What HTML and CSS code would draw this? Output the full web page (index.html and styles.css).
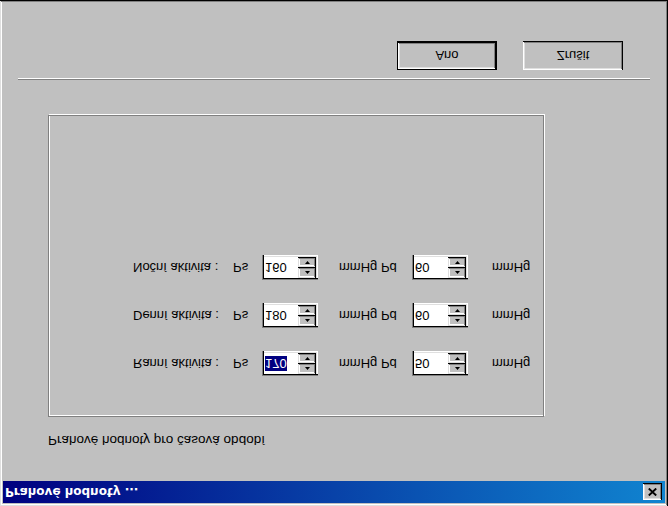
FILE: index.html
```html
<!DOCTYPE html>
<html lang="cs">
<head>
<meta charset="utf-8">
<title>Prahové hodnoty</title>
<link rel="stylesheet" href="styles.css">
</head>
<body>
<div class="screen">
  <div class="window">
    <div class="titlebar">
      <span class="title">Prahové hodnoty ...</span>
      <span class="close"><svg width="9" height="8" viewBox="0 0 9 8"><path d="M0.8 0.5 L8.2 7.5 M8.2 0.5 L0.8 7.5" stroke="#000" stroke-width="1.9" fill="none"/></svg></span>
    </div>
    <div class="grouplabel">Prahové hodnoty pro časová období</div>
    <div class="group">
      <div class="row">
        <span class="lbl">Ranní aktivita :</span>
        <span class="ps">Ps</span>
        <div class="spin"><div class="edit"><span class="sel">170</span></div><div class="updown"><span class="arrowbtn"><svg width="5" height="3" viewBox="0 0 5 3"><polygon points="2.5,0 5,3 0,3" fill="#000"/></svg></span><span class="arrowbtn"><svg width="5" height="3" viewBox="0 0 5 3"><polygon points="0,0 5,0 2.5,3" fill="#000"/></svg></span></div></div>
        <span class="unit">mmHg Pd</span>
        <div class="spin"><div class="edit"><span>50</span></div><div class="updown"><span class="arrowbtn"><svg width="5" height="3" viewBox="0 0 5 3"><polygon points="2.5,0 5,3 0,3" fill="#000"/></svg></span><span class="arrowbtn"><svg width="5" height="3" viewBox="0 0 5 3"><polygon points="0,0 5,0 2.5,3" fill="#000"/></svg></span></div></div>
        <span class="unit2">mmHg</span>
      </div>
      <div class="row">
        <span class="lbl">Denní aktivita :</span>
        <span class="ps">Ps</span>
        <div class="spin"><div class="edit"><span>180</span></div><div class="updown"><span class="arrowbtn"><svg width="5" height="3" viewBox="0 0 5 3"><polygon points="2.5,0 5,3 0,3" fill="#000"/></svg></span><span class="arrowbtn"><svg width="5" height="3" viewBox="0 0 5 3"><polygon points="0,0 5,0 2.5,3" fill="#000"/></svg></span></div></div>
        <span class="unit">mmHg Pd</span>
        <div class="spin"><div class="edit"><span>60</span></div><div class="updown"><span class="arrowbtn"><svg width="5" height="3" viewBox="0 0 5 3"><polygon points="2.5,0 5,3 0,3" fill="#000"/></svg></span><span class="arrowbtn"><svg width="5" height="3" viewBox="0 0 5 3"><polygon points="0,0 5,0 2.5,3" fill="#000"/></svg></span></div></div>
        <span class="unit2">mmHg</span>
      </div>
      <div class="row">
        <span class="lbl">Noční aktivita :</span>
        <span class="ps">Ps</span>
        <div class="spin"><div class="edit"><span>160</span></div><div class="updown"><span class="arrowbtn"><svg width="5" height="3" viewBox="0 0 5 3"><polygon points="2.5,0 5,3 0,3" fill="#000"/></svg></span><span class="arrowbtn"><svg width="5" height="3" viewBox="0 0 5 3"><polygon points="0,0 5,0 2.5,3" fill="#000"/></svg></span></div></div>
        <span class="unit">mmHg Pd</span>
        <div class="spin"><div class="edit"><span>60</span></div><div class="updown"><span class="arrowbtn"><svg width="5" height="3" viewBox="0 0 5 3"><polygon points="2.5,0 5,3 0,3" fill="#000"/></svg></span><span class="arrowbtn"><svg width="5" height="3" viewBox="0 0 5 3"><polygon points="0,0 5,0 2.5,3" fill="#000"/></svg></span></div></div>
        <span class="unit2">mmHg</span>
      </div>
    </div>
    <div class="sep"></div>
    <div class="buttons">
      <button class="btn default">Ano</button>
      <button class="btn">Zrušit</button>
    </div>
  </div>
</div>
</body>
</html>
```
FILE: styles.css
```css
html, body {
  margin: 0;
  padding: 0;
}
body {
  width: 668px;
  height: 506px;
  overflow: hidden;
  background: #c0c0c0;
  font-family: "Liberation Sans", Arial, sans-serif;
  font-size: 13px;
  color: #000;
}
.screen {
  width: 668px;
  height: 506px;
  transform: scaleY(-1);
}
.window {
  box-sizing: border-box;
  width: 668px;
  height: 506px;
  padding: 3px;
  background: #c0c0c0;
  box-shadow: inset -1px -1px #000, inset 1px 1px #dfdfdf, inset -2px -2px #808080, inset 2px 2px #fff;
  display: flex;
  flex-direction: column;
}
.titlebar {
  height: 22px;
  flex: none;
  display: flex;
  align-items: center;
  justify-content: space-between;
  padding: 0 3px 0 2px;
  background: linear-gradient(to right, #000080, #1084d0);
  color: #fff;
  font-family: "DejaVu Sans", sans-serif;
  font-weight: bold;
  font-size: 12px;
}
.close {
  width: 19px;
  height: 17px;
  background: #c0c0c0;
  box-shadow: inset -1px -1px #000, inset 1px 1px #fff, inset -2px -2px #808080, inset 2px 2px #dfdfdf;
  display: flex;
  align-items: center;
  justify-content: center;
}
.grouplabel {
  margin: 34px 0 0 45px;
  line-height: 14px;
  font-size: 13.5px;
}
.group {
  margin: 16px 0 0 45px;
  width: 496px;
  height: 302px;
  flex: none;
  box-sizing: border-box;
  border: 1px solid #808080;
  box-shadow: inset 1px 1px #fff, 1px 1px #fff;
  padding: 40px 0 0 84px;
  display: flex;
  flex-direction: column;
  gap: 23px;
}
.row {
  display: grid;
  grid-template-columns: 100px 29px 56px 94px 56px auto;
  align-items: center;
  height: 25px;
}
.unit { padding-left: 21px; }
.unit2 { padding-left: 24px; }
.spin {
  display: flex;
  height: 25px;
  box-sizing: border-box;
  padding: 2px;
  background: #fff;
  box-shadow: inset 1px 1px #808080, inset 2px 2px #000, inset -1px -1px #fff, inset -2px -2px #dfdfdf;
}
.edit {
  flex: 1;
  display: flex;
  align-items: center;
  padding-left: 1px;
  background: #fff;
}
.sel {
  background: #000080;
  color: #fff;
}
.updown {
  width: 18px;
  display: flex;
  flex-direction: column;
}
.arrowbtn {
  flex: 1;
  background: #c0c0c0;
  box-shadow: inset -1px -1px #000, inset 1px 1px #dfdfdf, inset -2px -2px #808080, inset 2px 2px #fff;
  display: flex;
  align-items: center;
  justify-content: center;
}
.arrowbtn svg { display: block; }
.sep {
  margin: 35px 0 0 15px;
  width: 632px;
  height: 0;
  border-top: 1px solid #808080;
  border-bottom: 1px solid #fff;
}
.buttons {
  margin: 8px 0 0 394px;
  display: flex;
  gap: 26px;
}
.btn {
  font: inherit;
  color: #000;
  width: 100px;
  height: 29px;
  padding: 0;
  border: none;
  background: #c0c0c0;
  box-shadow: inset -1px -1px #000, inset 1px 1px #fff, inset -2px -2px #808080, inset 2px 2px #dfdfdf;
}
.btn.default {
  box-shadow: inset 0 0 0 1px #000, inset -2px -2px #000, inset 2px 2px #fff, inset -3px -3px #808080, inset 3px 3px #dfdfdf;
}
```
